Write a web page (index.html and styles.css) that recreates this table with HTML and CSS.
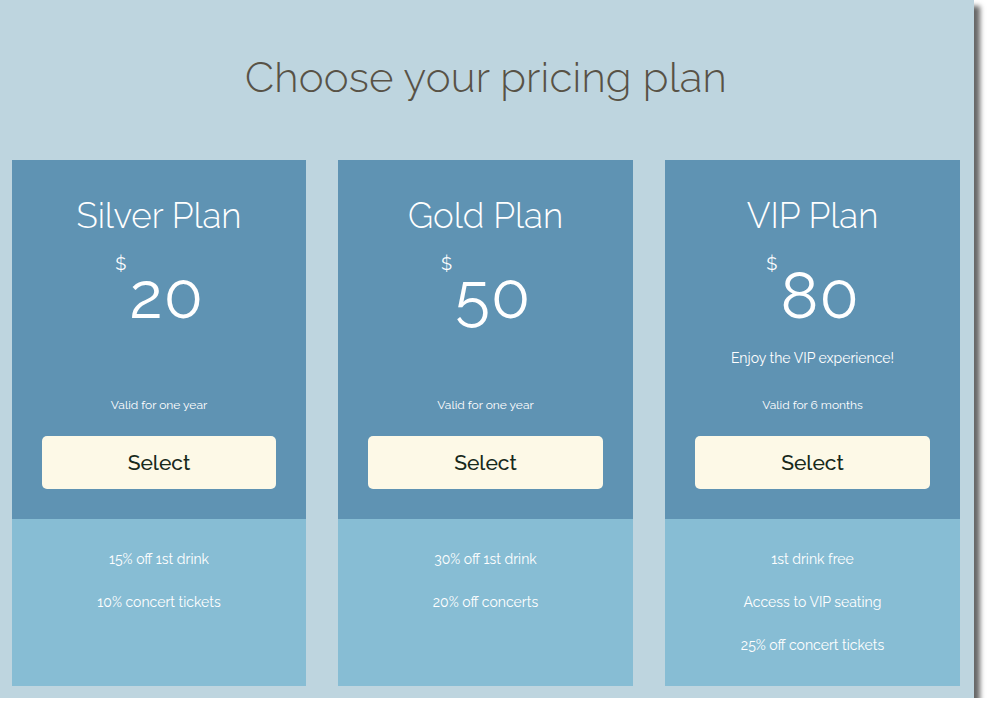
FILE: index.html
```html
<!DOCTYPE html>
<html>
<head>
<meta charset="utf-8">
<link rel="stylesheet" href="styles.css">
</head>
<body>
<div class="panel">
  <h1 class="title">Choose your pricing plan</h1>
  <div class="plans">
    <div class="plan">
      <div class="plan-top">
        <div class="plan-name">Silver Plan</div>
        <div class="price"><span class="cur">$</span><span class="amount">20</span></div>
        <div class="desc"></div>
        <div class="valid">Valid for one year</div>
        <button class="select">Select</button>
      </div>
      <ul class="features">
        <li>15% off 1st drink</li>
        <li>10% concert tickets</li>
      </ul>
    </div>
    <div class="plan">
      <div class="plan-top">
        <div class="plan-name">Gold Plan</div>
        <div class="price"><span class="cur">$</span><span class="amount">50</span></div>
        <div class="desc"></div>
        <div class="valid">Valid for one year</div>
        <button class="select">Select</button>
      </div>
      <ul class="features">
        <li>30% off 1st drink</li>
        <li>20% off concerts</li>
      </ul>
    </div>
    <div class="plan">
      <div class="plan-top">
        <div class="plan-name">VIP Plan</div>
        <div class="price"><span class="cur">$</span><span class="amount">80</span></div>
        <div class="desc">Enjoy the VIP experience!</div>
        <div class="valid">Valid for 6 months</div>
        <button class="select">Select</button>
      </div>
      <ul class="features">
        <li>1st drink free</li>
        <li>Access to VIP seating</li>
        <li>25% off concert tickets</li>
      </ul>
    </div>
  </div>
</div>
</body>
</html>
```
FILE: styles.css
```css
html, body {
  margin: 0;
  padding: 0;
  background: #ffffff;
}
body {
  font-family: "Raleway", "Lato", "Noto Sans", sans-serif;
}
.panel {
  width: 974px;
  height: 698px;
  box-sizing: border-box;
  background: #bed5df;
  padding: 0 14px 12px 12px;
  box-shadow: 6px 6px 5px rgba(0, 0, 0, 0.6);
  display: flex;
  flex-direction: column;
}
.title {
  margin: 0;
  height: 160px;
  box-sizing: border-box;
  padding-top: 52px;
  text-align: center;
  font-size: 42px;
  font-weight: 300;
  line-height: 52px;
  color: #585246;
  letter-spacing: 0.2px;
}
.plans {
  flex: 1;
  display: grid;
  grid-template-columns: 294px 295px 295px;
  column-gap: 32px;
}
.plan {
  display: flex;
  flex-direction: column;
  color: #ffffff;
  text-align: center;
}
.plan-top {
  background: #5f93b3;
  height: 359px;
  box-sizing: border-box;
  padding: 36px 30px 0;
  display: flex;
  flex-direction: column;
  align-items: stretch;
}
.plan-name {
  font-size: 35px;
  font-weight: 300;
  line-height: 40px;
}
.price {
  height: 88px;
  display: flex;
  justify-content: center;
  align-items: flex-start;
  margin-top: 25px;
}
.cur {
  font-size: 18px;
  line-height: 20px;
  margin-top: -7px;
  margin-right: 3px;
  font-weight: 400;
}
.amount {
  font-size: 64px;
  line-height: 70px;
  font-weight: 400;
  letter-spacing: 1px;
  margin-right: -1px;
}
.desc {
  height: 18px;
  font-size: 14px;
  line-height: 18px;
}
.valid {
  font-size: 12px;
  line-height: 16px;
  margin-top: 30px;
}
.select {
  margin-top: 23px;
  height: 53px;
  border: none;
  border-radius: 5px;
  background: #fdf9e7;
  color: #18291b;
  font-family: inherit;
  font-size: 21px;
  font-weight: 500;
  cursor: pointer;
}
.features {
  list-style: none;
  margin: 0;
  padding: 31px 0 0;
  flex: 1;
  background: #87bdd4;
}
.features li {
  font-size: 14px;
  line-height: 18px;
  height: 43px;
}
```
